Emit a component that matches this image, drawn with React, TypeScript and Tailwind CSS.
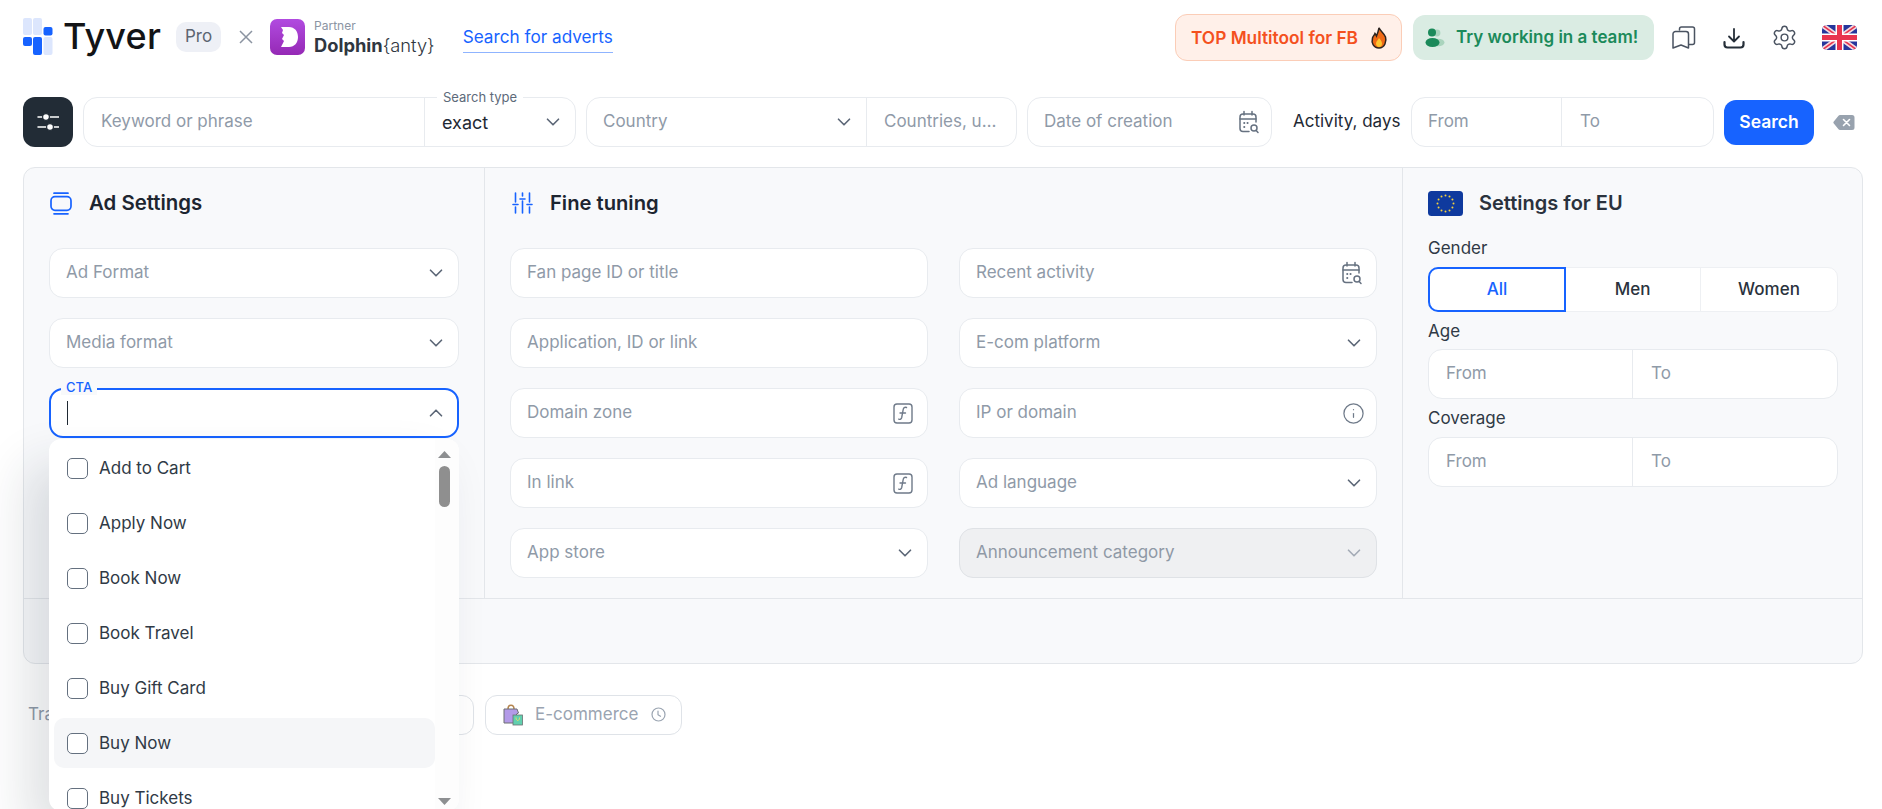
import React from "react";
import { ChevronDown, ChevronUp, Info, Settings } from "lucide-react";

function Chev() {
  return <ChevronDown size={22} strokeWidth={1.800} className="mr-[2px] text-[#5b6676] shrink-0" />;
}

function CalendarSearchIcon() {
  return (
    <svg width="22" height="24" viewBox="0 0 22 24" fill="none" stroke="#667180" strokeWidth="1.500" strokeLinecap="round" strokeLinejoin="round" className="shrink-0">
      <path d="M11 21.500H5a3 3 0 0 1-3-3V7a3 3 0 0 1 3-3h10a3 3 0 0 1 3 3v5" />
      <path d="M2 9h16M6 1.500V5M14 1.500V5" />
      <path d="M6.200 13h.1M9.500 13h.1M6.200 17h.1" strokeWidth="2" />
      <circle cx="16" cy="18" r="3" />
      <path d="M18.200 20.400 20 22.400" />
    </svg>
  );
}

function FuncIcon() {
  return (
    <svg width="20" height="21" viewBox="0 0 20 21" fill="none" stroke="#6f7a89" strokeWidth="1.400" strokeLinecap="round" className="shrink-0">
      <rect x="1" y="1" width="18" height="19" rx="3" />
      <path d="M13.500 4.500c-2-.6-3 .2-3.300 2l-1.500 8c-.4 1.800-1.400 2.200-3 1.600" />
      <path d="M7 10h5.500" />
    </svg>
  );
}

function Field({ text, right, disabled }: { text: string; right?: React.ReactNode; disabled?: boolean }) {
  return (
    <div className={disabled
      ? "h-[50px] flex items-center justify-between pl-[16px] pr-[9px] rounded-[14px] border border-[#dfe2e6] bg-[#eff0f2] text-[17px] text-[#8f99a6]"
      : "h-[50px] flex items-center justify-between pl-[16px] pr-[9px] rounded-[14px] border border-[#e8ebef] bg-white text-[17px] text-[#8f9aa8]"}>
      <span>{text}</span>
      {right}
    </div>
  );
}

function FromTo({ split }: { split: string }) {
  return (
    <div className="h-[50px] flex rounded-[14px] border border-[#e8ebef] bg-white text-[17px] text-[#8f9aa8]">
      <div className={split}>From</div>
      <div className="flex-1 flex items-center pl-[18px]">To</div>
    </div>
  );
}

function Logo() {
  return (
    <div className="flex items-center shrink-0">
      <svg width="30" height="37" viewBox="0 0 30 37" className="shrink-0">
        <rect x="0" y="0" width="9" height="17" rx="2" fill="#dce6fd" />
        <rect x="10" y="0" width="9" height="17" rx="2" fill="#dce6fd" />
        <rect x="20.500" y="9" width="9" height="8.500" rx="2" fill="#1763ff" />
        <rect x="0" y="19" width="9" height="9" rx="2" fill="#1763ff" />
        <rect x="10" y="19" width="9" height="18" rx="2" fill="#1763ff" />
        <rect x="20.500" y="19" width="9" height="18" rx="2" fill="#dce6fd" />
      </svg>
      <span className="ml-[10px] text-[36px] leading-[36px] font-medium tracking-[0.2px] text-[#131416]">Tyver</span>
    </div>
  );
}

function DolphinIcon() {
  return (
    <svg width="35" height="36" viewBox="0 0 35 36" className="shrink-0">
      <defs>
        <linearGradient id="dg" x1="0" y1="0" x2="0" y2="1">
          <stop offset="0" stopColor="#b14be0" />
          <stop offset="1" stopColor="#9529b5" />
        </linearGradient>
      </defs>
      <rect width="35" height="36" rx="7" fill="url(#dg)" />
      <path d="M11 8h8c5.500 0 9 4.300 9 10s-3.500 10-9 10h-8l3-6-2-2 2-4-2-2 1-3z" fill="#fff" />
    </svg>
  );
}

function Fire() {
  return (
    <svg width="18" height="22" viewBox="0 0 18 22" className="shrink-0">
      <path d="M9 .8c1 3 5 5 6.500 9.200 1.300 4-.6 11-6.500 11S1.300 15.500 2.500 11c.5-2 2-3 2.500-4.500.8 1 1.200 1.700 1.500 2.500C7.500 6.500 8.500 3.500 9 .8z" fill="#ef6a17" stroke="#2b2420" strokeWidth="1.500" />
      <path d="M9 11c.8 1.500 3 2.800 3 5.500S10.600 20 9 20s-3-1.300-3-3.500S8 13 9 11z" fill="#fdc52f" />
    </svg>
  );
}

function Team() {
  return (
    <svg width="20" height="20" viewBox="0 0 20 20" className="shrink-0">
      <circle cx="12" cy="5" r="3.400" fill="#a9d4bd" />
      <ellipse cx="13" cy="14.500" rx="6.500" ry="3.800" fill="#a9d4bd" />
      <circle cx="7" cy="4.500" r="4" fill="#1b8a5a" />
      <ellipse cx="7.500" cy="14.500" rx="7" ry="4.500" fill="#1b8a5a" />
    </svg>
  );
}

function Bookmarks() {
  return (
    <svg width="24" height="24" viewBox="0 0 24 24" fill="none" stroke="#4a5361" strokeWidth="1.500" strokeLinejoin="round" strokeLinecap="round" className="shrink-0">
      <path d="M7.500 4V3a2 2 0 0 1 2-2h11a2 2 0 0 1 2 2v13.500a2 2 0 0 1-2 2h-3.800" />
      <path d="M1 8a2.500 2.500 0 0 1 2.500-2.500h10.500A2.500 2.500 0 0 1 16.500 8v14l-7.500-3-8 3z" />
    </svg>
  );
}

function Download() {
  return (
    <svg width="22" height="22" viewBox="0 0 22 22" fill="none" strokeLinecap="round" strokeLinejoin="round" className="shrink-0">
      <path d="M11 2v12M6 9.500l5 5 5-5" stroke="#252e38" strokeWidth="1.800" />
      <path d="M1.500 15v2.500a3 3 0 0 0 3 3h13a3 3 0 0 0 3-3V15" stroke="#252e38" strokeWidth="2.200" />
    </svg>
  );
}

function UKFlag() {
  return (
    <svg width="35" height="25" viewBox="0 0 35 25" className="shrink-0">
      <defs>
        <clipPath id="ukc"><rect width="35" height="25" rx="5" /></clipPath>
      </defs>
      <g clipPath="url(#ukc)">
        <rect width="35" height="25" fill="#26369c" />
        <path d="M0 0 35 25M35 0 0 25" stroke="#f3d9df" strokeWidth="5" />
        <path d="M0 0 35 25M35 0 0 25" stroke="#e8344f" strokeWidth="1.600" />
        <path d="M17.500 0v25M0 12.500h35" stroke="#fff" strokeWidth="8" />
        <path d="M17.500 0v25M0 12.500h35" stroke="#e8344f" strokeWidth="5" />
      </g>
    </svg>
  );
}

function EUFlag() {
  const stars = Array.from({ length: 12 }, (_, i) => {
    const a = (i / 12) * Math.PI * 2;
    return { x: 17.500 + Math.cos(a) * 8, y: 12.500 + Math.sin(a) * 8 };
  });
  return (
    <svg width="35" height="25" viewBox="0 0 35 25" className="shrink-0">
      <rect width="35" height="25" rx="3.500" fill="#0f3a9e" />
      {stars.map((s, i) => (
        <circle key={i} cx={s.x} cy={s.y} r="1" fill="#f4d03f" />
      ))}
    </svg>
  );
}

function AdIcon() {
  return (
    <svg width="22" height="23" viewBox="0 0 22 23" fill="none" stroke="#1763ff" strokeWidth="1.700" strokeLinecap="round" className="shrink-0">
      <path d="M4 1.200h14M4 21.800h14" />
      <rect x="1" y="4.700" width="20" height="13.600" rx="4" />
    </svg>
  );
}

function TuneIcon() {
  return (
    <svg width="21" height="22" viewBox="0 0 21 22" fill="none" stroke="#1763ff" strokeWidth="1.600" strokeLinecap="round" className="shrink-0">
      <path d="M3.500 1v9M3.500 15v6M10.500 1v3M10.500 9v12M17.500 1v9M17.500 15v6" />
      <path d="M1 12.500h5M8 7h5M15 12.500h5" />
    </svg>
  );
}

function Triangle({ down }: { down?: boolean }) {
  return (
    <svg width="13" height="7" viewBox="0 0 13 7" className="shrink-0">
      <path d={down ? "M0 0h13L6.500 7z" : "M0 7h13L6.500 0z"} fill="#8d8f91" />
    </svg>
  );
}

function Bags() {
  return (
    <svg width="20" height="22" viewBox="0 0 20 22" className="shrink-0">
      <path d="M5 5c0-5 6-5 6 0" fill="none" stroke="#b5854f" strokeWidth="1.500" />
      <path d="M1 5h13l1.500 4-2 1v9H1z" fill="#b39ae8" stroke="#6d6f73" strokeWidth="1" />
      <rect x="10" y="11" width="9.500" height="10" fill="#61d0ae" stroke="#6d6f73" strokeWidth="0.800" />
      <path d="M13 13.500c0 4 3.500 4 3.500 0" fill="none" stroke="#e8dd6a" strokeWidth="1" />
    </svg>
  );
}

function ClockIcon() {
  return (
    <svg width="15" height="15" viewBox="0 0 15 15" fill="none" stroke="#9aa4b1" strokeWidth="1.200" strokeLinecap="round" strokeLinejoin="round" className="shrink-0">
      <circle cx="7.500" cy="7.500" r="6.500" />
      <path d="M7 4v3.800l2.500 1.500" />
    </svg>
  );
}

const OPTIONS = ["Add to Cart", "Apply Now", "Book Now", "Book Travel", "Buy Gift Card", "Buy Now", "Buy Tickets"];

function Dropdown() {
  return (
    <div className="absolute left-[-2px] top-[49px] z-20 w-[410px] h-[372px] flex bg-white rounded-[12px] shadow-[-22px_26px_50px_rgba(30,41,59,0.14)]">
      <div className="flex-1 pl-[5px] pt-[4px] flex flex-col gap-[5px] overflow-hidden">
        {OPTIONS.map((o) => (
          <div key={o} className={o === "Buy Now"
            ? "h-[50px] shrink-0 flex items-center pl-[13px] rounded-[10px] bg-[#f5f6f8] text-[17px] text-[#303a46]"
            : "h-[50px] shrink-0 flex items-center pl-[13px] rounded-[10px] text-[17px] text-[#303a46]"}>
            <span className="w-[21px] h-[21px] rounded-[5px] border-[1.5px] border-[#64707f] bg-white shrink-0" />
            <span className="ml-[11px] mt-[1px]">{o}</span>
          </div>
        ))}
      </div>
      <div className="w-[24px] shrink-0 flex flex-col items-start pl-[3px] pt-[12px] pb-[6px] bg-[#fdfdfd] rounded-r-[12px]">
        <Triangle />
        <div className="ml-[1px] mt-[8px] w-[11px] h-[41px] rounded-full bg-[#8f8f8f]" />
        <div className="flex-1" />
        <Triangle down />
      </div>
    </div>
  );
}

export default function App() {
  return (
    <div className="relative w-[1882px] h-[809px] overflow-hidden bg-white font-['Inter',sans-serif] text-[#1f2933]">
      {/* Header */}
      <header className="h-[47px] mt-[14px] pl-[23px] pr-[25px] flex items-center">
        <div className="-mt-[3px]"><Logo /></div>
        <div className="ml-[15px] -mt-[1px] w-[45px] h-[30px] rounded-[10px] bg-[#eef0f6] flex items-center justify-center text-[17px] text-[#5c6572]">Pro</div>
        <svg width="14" height="14" viewBox="0 0 14 14" className="ml-[18px] -mt-[1px] shrink-0" fill="none" stroke="#8b94a1" strokeWidth="1.500"><path d="M1 1l12 12M13 1 1 13" /></svg>
        <div className="ml-[17px] -mt-[2px]"><DolphinIcon /></div>
        <div className="ml-[9px] -mt-[2px] flex flex-col">
          <span className="text-[12px] leading-[16px] text-[#8b95a3]">Partner</span>
          <span className="text-[18.300px] leading-[22px] text-[#2f3640]"><span className="font-bold">Dolphin</span><span className="font-light">{"{anty}"}</span></span>
        </div>
        <div className="ml-[28px] -mt-[2px] h-[33px] border-b border-[#8fb4ff] text-[17.200px] leading-[33px] text-[#1763ff] whitespace-nowrap">Search for adverts</div>
        <div className="ml-auto flex items-center">
          <div className="w-[227px] h-[47px] rounded-[12px] border border-[#fbcdb7] bg-[#fff0e9] flex items-center pl-[15px] text-[17.300px] font-semibold text-[#f4511e] whitespace-nowrap">
            TOP Multitool for FB
            <span className="ml-[12px]"><Fire /></span>
          </div>
          <div className="ml-[11px] w-[241px] h-[45px] rounded-[12px] bg-[#daece3] flex items-center pl-[12px] text-[17px] font-semibold text-[#1b8a5a] whitespace-nowrap">
            <Team />
            <span className="ml-[11px]">Try working in a team!</span>
          </div>
          <div className="ml-[18px]"><Bookmarks /></div>
          <div className="ml-[27px]"><Download /></div>
          <Settings size={27} strokeWidth={1.300} className="ml-[26px] text-[#4a5361] shrink-0" />
          <div className="ml-[24px]"><UKFlag /></div>
        </div>
      </header>

      {/* Search row */}
      <section className="mt-[36px] h-[50px] pl-[23px] flex items-center">
        <button className="w-[50px] h-[50px] rounded-[12px] bg-[#222c36] flex items-center justify-center shrink-0">
          <svg width="22" height="20" viewBox="0 0 22 20" fill="none" stroke="#fff" strokeWidth="1.500" strokeLinecap="round">
            <path d="M1 5h21M1 15h21" />
            <circle cx="9" cy="5" r="3.400" fill="#fff" stroke="#222c36" strokeWidth="1.200" />
            <circle cx="13" cy="15" r="3.400" fill="#fff" stroke="#222c36" strokeWidth="1.200" />
          </svg>
        </button>
        <div className="ml-[10px] w-[493px] h-[50px] flex rounded-[14px] border border-[#e8ebef] bg-white text-[17px]">
          <div className="w-[341px] border-r border-[#e8ebef] flex items-center pl-[17px] text-[#8f9aa8]">Keyword or phrase</div>
          <div className="relative flex-1 flex items-center justify-between pl-[17px] pr-[9px] text-[#1f2933]">
            <span className="absolute left-[12px] top-[-9px] px-[6px] bg-white text-[13px] leading-[16px] text-[#5d6a7a] whitespace-nowrap">Search type</span>
            <span className="text-[18px]">exact</span>
            <Chev />
          </div>
        </div>
        <div className="ml-[10px] w-[431px] h-[50px] flex rounded-[14px] border border-[#e8ebef] bg-white text-[17px] text-[#8f9aa8]">
          <div className="w-[280px] border-r border-[#e8ebef] flex items-center justify-between pl-[16px] pr-[9px]">
            <span>Country</span>
            <Chev />
          </div>
          <div className="flex-1 min-w-0 flex items-center pl-[17px] pr-[15px]"><span className="truncate">Countries, up to 5</span></div>
        </div>
        <div className="ml-[10px] w-[245px] h-[50px] flex items-center justify-between pl-[16px] pr-[11px] rounded-[14px] border border-[#e8ebef] bg-white text-[17px] text-[#8f9aa8]">
          <span className="whitespace-nowrap">Date of creation</span>
          <CalendarSearchIcon />
        </div>
        <span className="ml-[21px] w-[108px] text-[17px] text-[#1f2933] whitespace-nowrap">Activity, days</span>
        <div className="ml-[10px] w-[303px] h-[50px] flex rounded-[14px] border border-[#e8ebef] bg-white text-[17px] text-[#8f9aa8]">
          <div className="w-[150px] border-r border-[#e8ebef] flex items-center pl-[16px]">From</div>
          <div className="flex-1 flex items-center pl-[18px]">To</div>
        </div>
        <button className="ml-[10px] w-[90px] h-[45px] rounded-[12px] bg-[#1763ff] text-white text-[17.500px] font-semibold">Search</button>
        <svg width="22" height="17" viewBox="0 0 22 17" className="ml-[19px] shrink-0">
          <path d="M7 1h12a2.500 2.500 0 0 1 2.500 2.500v10A2.500 2.500 0 0 1 19 16H7a2 2 0 0 1-1.500-.8L.8 9.500a1.500 1.500 0 0 1 0-2L5.500 1.800A2 2 0 0 1 7 1z" fill="#98a2ae" />
          <path d="M10.500 5.500l6 6M16.500 5.500l-6 6" stroke="#fff" strokeWidth="1.600" strokeLinecap="round" />
        </svg>
      </section>

      {/* Panel */}
      <section className="mt-[20px] ml-[23px] w-[1840px] h-[497px] rounded-[12px] border border-[#e3e6ea] bg-[#f8f9fb] flex flex-col">
        <div className="h-[431px] flex border-b border-[#e3e6ea]">
          {/* Ad settings */}
          <div className="w-[461px] shrink-0 border-r border-[#e3e6ea] pl-[25px] pr-[25px] pt-[23px]">
            <div className="h-[24px] mb-[33px] flex items-center">
              <span className="ml-[1px] flex"><AdIcon /></span>
              <span className="ml-[17px] text-[20.400px] font-semibold text-[#1d2530]">Ad Settings</span>
            </div>
            <div className="flex flex-col gap-[20px]">
              <Field text="Ad Format" right={<Chev />} />
              <Field text="Media format" right={<Chev />} />
              <div className="relative h-[50px] flex items-center justify-between pl-[16px] pr-[8px] rounded-[14px] border-2 border-[#1763ff] bg-white">
                <span className="absolute left-[10px] top-[-11px] px-[5px] bg-[#f8f9fb] text-[13px] leading-[16px] font-medium text-[#1763ff]">CTA</span>
                <span className="w-[1px] h-[24px] bg-[#1f2933]" />
                <ChevronUp size={22} strokeWidth={1.800} className="mr-[2px] text-[#5b6676] shrink-0" />
                <Dropdown />
              </div>
            </div>
          </div>

          {/* Fine tuning */}
          <div className="w-[918px] shrink-0 border-r border-[#e3e6ea] pl-[25px] pr-[25px] pt-[23px]">
            <div className="h-[24px] mb-[33px] flex items-center">
              <span className="ml-[2px]"><TuneIcon /></span>
              <span className="ml-[17px] text-[20.200px] font-semibold text-[#1d2530]">Fine tuning</span>
            </div>
            <div className="grid grid-cols-2 gap-x-[31px] gap-y-[20px]">
              <Field text="Fan page ID or title" />
              <Field text="Recent activity" right={<span className="mr-[4px] flex"><CalendarSearchIcon /></span>} />
              <Field text="Application, ID or link" />
              <Field text="E-com platform" right={<Chev />} />
              <Field text="Domain zone" right={<span className="mr-[5px] flex"><FuncIcon /></span>} />
              <Field text="IP or domain" right={<Info size={23} strokeWidth={1.300} className="mr-[2px] text-[#6f7a89]" />} />
              <Field text="In link" right={<span className="mr-[5px] flex"><FuncIcon /></span>} />
              <Field text="Ad language" right={<Chev />} />
              <Field text="App store" right={<Chev />} />
              <Field text="Announcement category" disabled right={<ChevronDown size={22} strokeWidth={1.800} className="mr-[2px] text-[#a3abb6] shrink-0" />} />
            </div>
          </div>

          {/* EU */}
          <div className="flex-1 pl-[25px] pr-[24px] pt-[23px]">
            <div className="h-[24px] flex items-center">
              <EUFlag />
              <span className="ml-[16px] text-[20px] font-semibold text-[#2a323d]">Settings for EU</span>
            </div>
            <div className="mt-[21px] mb-[7px] h-[24px] leading-[24px] text-[17px] text-[#303a46]">Gender</div>
            <div className="h-[45px] flex rounded-[10px] border border-[#eef0f3] bg-white text-[17px] font-medium text-[#2a323d]">
              <div className="w-[138px] -m-[1px] rounded-l-[10px] border-2 border-[#1763ff] flex items-center justify-center text-[#1763ff]">All</div>
              <div className="w-[136px] flex items-center justify-center border-r border-[#eef0f3]">Men</div>
              <div className="flex-1 flex items-center justify-center">Women</div>
            </div>
            <div className="mt-[7px] mb-[6px] h-[24px] leading-[24px] text-[17px] text-[#303a46]">Age</div>
            <FromTo split="w-[204px] border-r border-[#e8ebef] flex items-center pl-[17px]" />
            <div className="mt-[7px] mb-[7px] h-[24px] leading-[24px] text-[17px] text-[#303a46]">Coverage</div>
            <FromTo split="w-[204px] border-r border-[#e8ebef] flex items-center pl-[17px]" />
          </div>
        </div>
      </section>

      {/* Trends */}
      <section className="mt-[31px] pl-[28px] h-[40px] flex items-center text-[17px] text-[#8f9aa8]">
        <span className="w-[100px] whitespace-nowrap">Traffic</span>
        <div className="w-[346px] h-[40px] rounded-[12px] border border-[#dfe3e8] bg-white" />
        <div className="ml-[11px] w-[197px] h-[40px] rounded-[12px] border border-[#dfe3e8] bg-white flex items-center pl-[17px]">
          <Bags />
          <span className="ml-[12px] text-[#9aa4b1]">E-commerce</span>
          <span className="ml-[13px] -mt-[2px] flex"><ClockIcon /></span>
        </div>
      </section>
    </div>
  );
}
